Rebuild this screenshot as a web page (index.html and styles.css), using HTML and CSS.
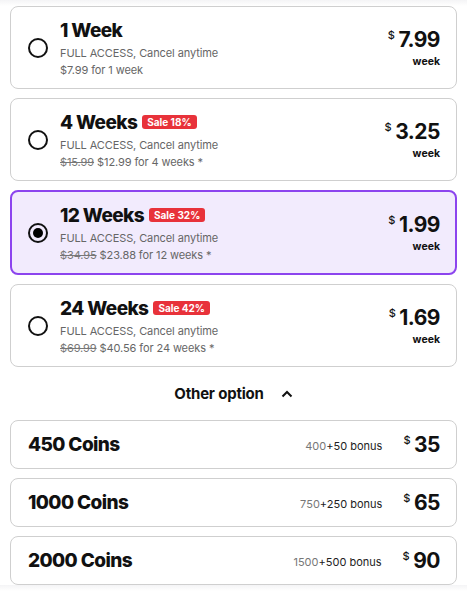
FILE: index.html
```html
<!DOCTYPE html>
<html lang="en">
<head>
  <meta charset="UTF-8">
  <meta name="viewport" content="width=device-width, initial-scale=1.0">
  <title>Plans</title>
  <link rel="stylesheet" href="styles.css">
</head>
<body>
  <div class="plans">
    <div class="plan">
      <span class="radio"></span>
      <div class="plan-info">
        <div class="plan-title">1 Week</div>
        <div class="plan-desc">FULL ACCESS, Cancel anytime</div>
        <div class="plan-desc">$7.99 for 1 week</div>
      </div>
      <div class="plan-price">
        <div class="amount"><sup>$</sup>7.99</div>
        <div class="per">week</div>
      </div>
    </div>

    <div class="plan">
      <span class="radio"></span>
      <div class="plan-info">
        <div class="plan-title">4 Weeks <span class="sale">Sale 18%</span></div>
        <div class="plan-desc">FULL ACCESS, Cancel anytime</div>
        <div class="plan-desc"><s>$15.99</s> $12.99 for 4 weeks *</div>
      </div>
      <div class="plan-price">
        <div class="amount"><sup>$</sup>3.25</div>
        <div class="per">week</div>
      </div>
    </div>

    <div class="plan selected">
      <span class="radio"></span>
      <div class="plan-info">
        <div class="plan-title">12 Weeks <span class="sale">Sale 32%</span></div>
        <div class="plan-desc">FULL ACCESS, Cancel anytime</div>
        <div class="plan-desc"><s>$34.95</s> $23.88 for 12 weeks *</div>
      </div>
      <div class="plan-price">
        <div class="amount"><sup>$</sup>1.99</div>
        <div class="per">week</div>
      </div>
    </div>

    <div class="plan">
      <span class="radio"></span>
      <div class="plan-info">
        <div class="plan-title">24 Weeks <span class="sale">Sale 42%</span></div>
        <div class="plan-desc">FULL ACCESS, Cancel anytime</div>
        <div class="plan-desc"><s>$69.99</s> $40.56 for 24 weeks *</div>
      </div>
      <div class="plan-price">
        <div class="amount"><sup>$</sup>1.69</div>
        <div class="per">week</div>
      </div>
    </div>
  </div>

  <div class="other-toggle">
    Other option
    <svg width="12" height="8" viewBox="0 0 12 8"><path d="M1.5 6.5 L6 2 L10.5 6.5" fill="none" stroke="#111" stroke-width="2"/></svg>
  </div>

  <div class="coins">
    <div class="coin">
      <div class="coin-title">450 Coins</div>
      <div class="bonus"><span class="base">400</span>+50 bonus</div>
      <div class="amount"><sup>$</sup>35</div>
    </div>
    <div class="coin">
      <div class="coin-title">1000 Coins</div>
      <div class="bonus"><span class="base">750</span>+250 bonus</div>
      <div class="amount"><sup>$</sup>65</div>
    </div>
    <div class="coin">
      <div class="coin-title">2000 Coins</div>
      <div class="bonus"><span class="base">1500</span>+500 bonus</div>
      <div class="amount"><sup>$</sup>90</div>
    </div>
  </div>
</body>
</html>
```

FILE: styles.css
```css
body {
  margin: 0;
  padding: 6px 10px 0;
  background: linear-gradient(#f4f4f6, #ffffff 6px);
  color: #111;
  font-family: Inter, "Noto Sans", sans-serif;
}

.plans {
  display: flex;
  flex-direction: column;
  gap: 9px;
}

.plan {
  display: flex;
  align-items: center;
  height: 83px;
  box-sizing: border-box;
  padding: 0 16px 0 17px;
  border: 1px solid #cfcfcf;
  border-radius: 8px;
  background: #fff;
}

.plan.selected {
  height: 85px;
  border: 2px solid #8c44ee;
  background: #f2ebfd;
  padding: 0 15px 0 16px;
}

.radio {
  width: 16px;
  height: 16px;
  border: 2px solid #111;
  border-radius: 50%;
  flex-shrink: 0;
  margin-right: 12px;
  box-sizing: content-box;
  position: relative;
}

.selected .radio::after {
  content: "";
  position: absolute;
  left: 3px;
  top: 3px;
  width: 10px;
  height: 10px;
  border-radius: 50%;
  background: #000;
}

.plan-info {
  flex: 1;
  padding-top: 3px;
}

.plan-title {
  display: flex;
  align-items: center;
  gap: 5px;
  font-size: 19px;
  font-weight: 800;
  letter-spacing: -0.6px;
  line-height: 24px;
  margin-bottom: 2px;
}

.sale {
  background: #e8323a;
  color: #fff;
  font-size: 10px;
  font-weight: 700;
  letter-spacing: 0;
  line-height: 14px;
  padding: 0 5px;
  border-radius: 3px;
  margin-top: -2px;
}

.plan-desc {
  font-size: 11px;
  color: #666;
  line-height: 17px;
  letter-spacing: -0.1px;
}

.plan-desc s {
  color: #777;
}

.plan-price {
  text-align: right;
}

.amount {
  font-size: 21px;
  font-weight: 700;
  letter-spacing: -0.5px;
  line-height: 24px;
}

.amount sup {
  font-size: 11px;
  font-weight: 500;
  vertical-align: top;
  line-height: 14px;
  margin-right: 4px;
}

.per {
  font-size: 10.5px;
  font-weight: 700;
  margin-top: 3px;
}

.other-toggle {
  display: flex;
  align-items: center;
  justify-content: center;
  gap: 17px;
  height: 53px;
  font-size: 15px;
  font-weight: 700;
  letter-spacing: -0.2px;
}

.coins {
  display: flex;
  flex-direction: column;
  gap: 9px;
}

.coin {
  display: flex;
  align-items: center;
  height: 49px;
  box-sizing: border-box;
  padding: 0 16px 0 17px;
  border: 1px solid #cfcfcf;
  border-radius: 8px;
}

.coin-title {
  flex: 1;
  font-size: 19px;
  font-weight: 800;
  letter-spacing: -0.6px;
}

.bonus {
  font-size: 11px;
  color: #222;
  margin-right: 21px;
  margin-top: 2px;
}

.bonus .base {
  color: #777;
}
```
